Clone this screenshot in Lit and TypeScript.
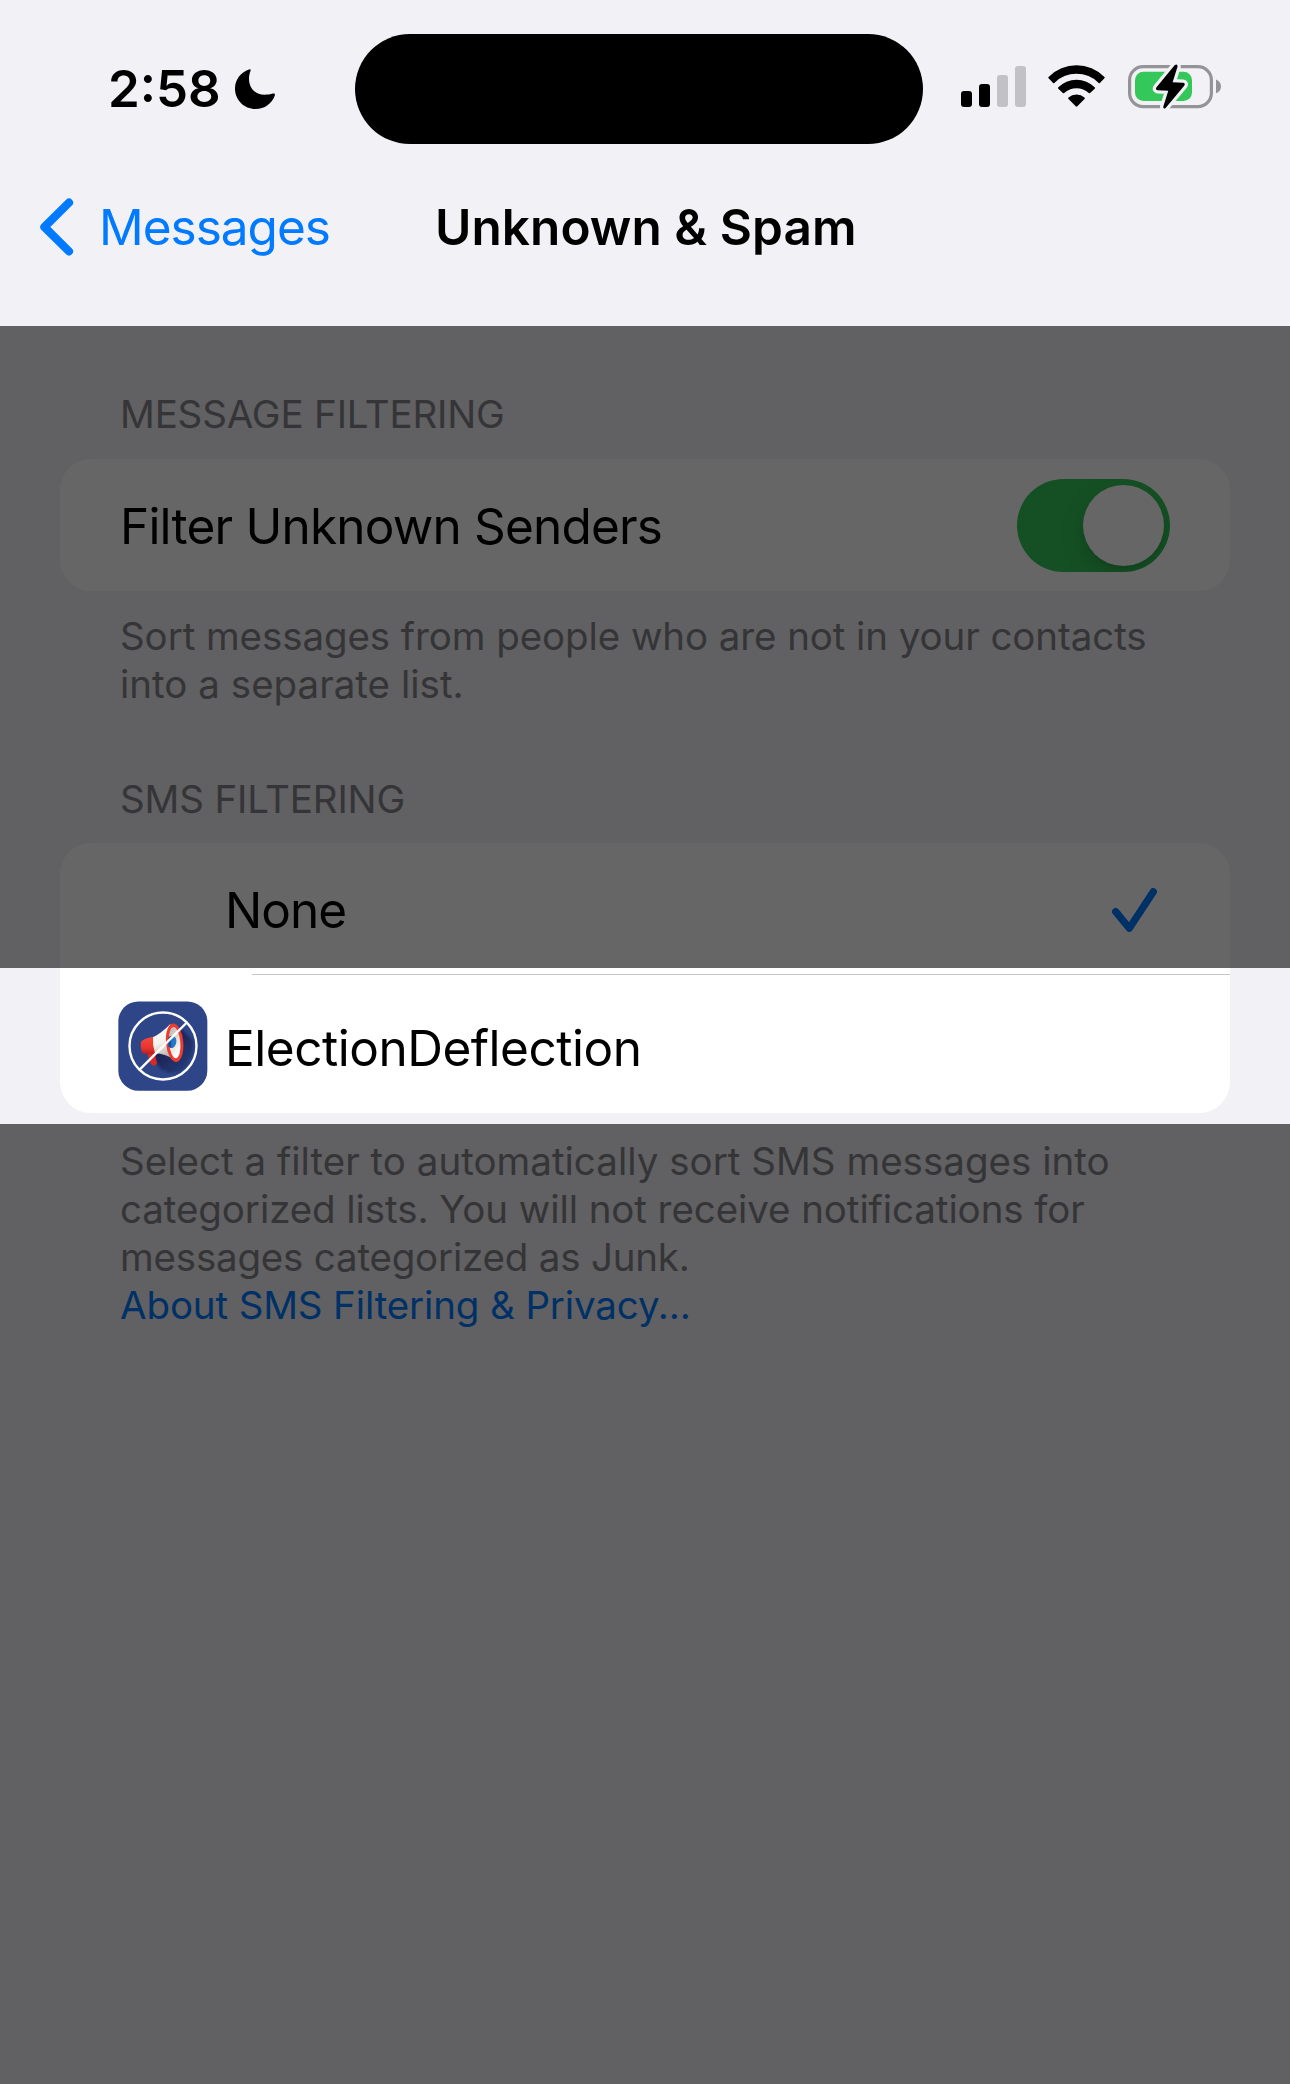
import { LitElement, html, css, svg, nothing } from "lit";
import { customElement, property, state } from "lit/decorators.js";

const FONT = css`"Inter", "Liberation Sans", sans-serif`;

/** Status bar with the clock, the island cut-out and the system indicators. */
@customElement("status-bar")
export class StatusBar extends LitElement {
  static styles = css`
    :host {
      display: grid;
      grid-template-columns: 355px 568px 1fr;
      height: 162px;
      font-family: ${FONT};
    }
    .left {
      display: flex;
      align-items: flex-start;
      padding: 58px 0 0 108px;
    }
    .time {
      font-size: 51px;
      font-weight: 600;
      line-height: 61px;
      width: 127px;
      flex: none;
    }
    .moon {
      margin-top: 11px;
      flex: none;
    }
    .island {
      margin-top: 34px;
      height: 110px;
      border-radius: 55px;
      background: #000;
    }
    .right {
      display: flex;
      align-items: flex-start;
      padding: 62px 0 0 38px;
    }
    .right svg {
      display: block;
      flex: none;
    }
    .wifi {
      margin: 3px 0 0 22px;
    }
    .battery {
      margin-left: 23px;
    }
    .signal {
      margin-top: 4px;
    }
  `;

  render() {
    return html`
      <div class="left">
        <span class="time">2:58</span>
        <svg class="moon" width="40" height="40" viewBox="0 0 40 40">
          <path d="M14 .4C15.5-.2 16 .6 15.5 1.9C14.5 4.2 14 6.8 14 9.6C14 19 20 25.8 29.5 25.8C32.5 25.8 35.5 25.4 37.9 24.6C39.4 24.2 40.3 25 39.8 26.4C37 34.5 29.5 40 20.6 40C9 40 0 31 0 19.5C0 10.5 5.5 3.4 14 .4Z" />
        </svg>
      </div>
      <div class="island"></div>
      <div class="right">
        <svg class="signal" width="65" height="41" viewBox="0 0 65 41">
          <rect x="0" y="25" width="11" height="16" rx="3" />
          <rect x="18" y="18" width="11" height="23" rx="3" />
          <rect x="36" y="9" width="11" height="32" rx="3" fill="#c2c1c6" />
          <rect x="54" y="0" width="11" height="41" rx="3" fill="#c2c1c6" />
        </svg>
        <svg class="wifi" width="57" height="42" viewBox="0 0 57 42">
          <path d="M.6 12A39.2 39.2 0 0 1 56.4 12Q57 12.7 56.4 13.3L51.9 17.9Q51.3 18.5 50.7 17.9A31.4 31.4 0 0 0 6.3 17.9Q5.7 18.5 5.1 17.9L.6 13.3Q0 12.7 .6 12Z" />
          <path d="M10.3 22.3A25.6 25.6 0 0 1 46.7 22.3Q47.4 23 46.7 23.7L42.1 28Q41.5 28.6 40.8 28A18 18 0 0 0 16.2 28Q15.5 28.6 14.9 28L10.3 23.7Q9.6 23 10.3 22.3Z" />
          <path d="M20.5 32.6A11.8 11.8 0 0 1 36.5 32.6Q37.3 33.4 36.5 34.1L29.3 41.3Q28.5 42 27.7 41.3L20.5 34.1Q19.7 33.4 20.5 32.6Z" />
        </svg>
        <svg class="battery" width="94" height="50" viewBox="0 0 94 50">
          <rect x="1.6" y="4.6" width="81.8" height="40" rx="13.5" fill="none" stroke="#949397" stroke-width="3.2" />
          <rect x="7" y="9.8" width="57" height="29.2" rx="8.5" fill="#34c759" />
          <path d="M88 17.5C91.2 18.7 93 21.3 93 24.4S91.2 30.1 88 31.3Z" fill="#949397" />
          <path
            d="M46.6 3.3L28.5 25.3Q27 27.7 29.5 28.2L40.3 28.8L35.3 44.6Q35 47.6 37.6 46L56.2 23.7Q57.8 21.2 55 20.8L44.6 20.2L49.6 4.6Q49.4 1.2 46.6 3.3Z"
            fill="#000"
            stroke="#f2f1f6"
            stroke-width="6.5"
            stroke-linejoin="round"
            paint-order="stroke"
          />
        </svg>
      </div>
    `;
  }
}

/** Navigation bar with a back link and a title. */
@customElement("nav-bar")
export class NavBar extends LitElement {
  @property() back = "";
  @property() heading = "";

  static styles = css`
    :host {
      display: grid;
      grid-template-columns: 435px 1fr;
      align-items: center;
      height: 130px;
      font: 400 49.5px/60px ${FONT};
      white-space: nowrap;
    }
    .back {
      display: flex;
      align-items: center;
      padding-left: 39px;
      color: #007aff;
      letter-spacing: -1px;
    }
    .back svg {
      width: 35px;
      height: 58px;
      margin-right: 25px;
    }
    .title {
      font-weight: 600;
      letter-spacing: 0.06px;
    }
  `;

  render() {
    return html`
      <div class="back">
        <svg viewBox="0 0 35 58" fill="none" stroke="#007aff" stroke-width="8.2" stroke-linecap="round" stroke-linejoin="round">
          <path d="M30 4.7L5.4 29L30 53.3" />
        </svg>
        <span>${this.back}</span>
      </div>
      <div class="title">${this.heading}</div>
    `;
  }
}

/** On/off switch. */
@customElement("ios-switch")
export class IosSwitch extends LitElement {
  @property({ type: Boolean, reflect: true }) on = false;

  static styles = css`
    :host {
      display: flex;
      align-items: center;
      box-sizing: border-box;
      width: 153px;
      height: 93px;
      padding: 6px;
      border-radius: 47px;
      background: #e9e9ea;
      overflow: hidden;
    }
    :host([on]) {
      justify-content: flex-end;
      background: #34c759;
    }
    .knob {
      width: 81px;
      height: 81px;
      border-radius: 50%;
      background: #fff;
      box-shadow: 0 9px 24px rgba(0, 0, 0, 0.15), 0 3px 3px rgba(0, 0, 0, 0.06);
    }
  `;

  render() {
    return html`<div class="knob"></div>`;
  }
}

const appIcon = svg`
  <defs>
    <linearGradient id="cone" x1="0" y1="0" x2=".25" y2="1">
      <stop offset="0" stop-color="#ffffff" />
      <stop offset=".55" stop-color="#f6f1ec" />
      <stop offset="1" stop-color="#b8aea6" />
    </linearGradient>
    <linearGradient id="cap" x1="0" y1="0" x2="0" y2="1">
      <stop offset="0" stop-color="#f4493c" />
      <stop offset=".65" stop-color="#e8342c" />
      <stop offset="1" stop-color="#b32026" />
    </linearGradient>
    <linearGradient id="bell" x1="0" y1="0" x2=".4" y2="1">
      <stop offset="0" stop-color="#b9b0a4" />
      <stop offset=".5" stop-color="#ddd8d0" />
      <stop offset="1" stop-color="#ffffff" />
    </linearGradient>
    <linearGradient id="shade" x1="0" y1="0" x2="1" y2="1">
      <stop offset="0" stop-color="#101c48" stop-opacity=".95" />
      <stop offset=".45" stop-color="#16224f" stop-opacity=".85" />
      <stop offset="1" stop-color="#1d2c62" stop-opacity=".3" />
    </linearGradient>
    <filter id="soft" x="-20%" y="-20%" width="140%" height="140%">
      <feGaussianBlur stdDeviation="3" />
    </filter>
  </defs>
  <rect x="56" y="47.5" width="267" height="267.5" rx="60" fill="#2e4688" />
  <path d="M150 205L240 125L280 165Q282 222 244 256Q212 270 184 250Z" fill="url(#shade)" filter="url(#soft)" />
  <path d="M142 200L164 196L172 233Q170 241 161 240Q153 238 150 228Z" fill="#d62a28" />
  <path d="M162 153Q128 158 124 170Q121 184 128 203Q142 208 170 203Z" fill="url(#cap)" />
  <path d="M160 155Q186 142 212 115L232 226Q196 204 166 203Q158 180 160 155Z" fill="url(#cone)" />
  <ellipse cx="225" cy="171" rx="26" ry="58" transform="rotate(-5 225 171)" fill="#ee3a30" />
  <ellipse cx="225" cy="171" rx="17" ry="47" transform="rotate(-5 225 171)" fill="url(#bell)" />
  <path d="M206 156Q212 148 221 151Q231 156 230 169Q228 182 219 187Q209 188 206 181Z" fill="#2478c8" />
  <path d="M206 156Q211 150 216 152Q214 170 215 186Q209 187 206 181Z" fill="#174f96" />
  <g fill="none" stroke="#fff" stroke-width="7.2">
    <circle cx="190" cy="181" r="100.5" />
    <path d="M120 252L260 112" />
  </g>
`;

interface FilterOption {
  name: string;
  tracking: "none" | "app";
  hasIcon: boolean;
}

const OPTIONS: FilterOption[] = [
  { name: "None", tracking: "none", hasIcon: false },
  { name: "ElectionDeflection", tracking: "app", hasIcon: true },
];

interface NoteLine {
  text: string;
  fit: "" | "loose" | "tight";
}

const SORT_NOTE: NoteLine[] = [
  { text: "Sort messages from people who are not in your contacts", fit: "" },
  { text: "into a separate list.", fit: "loose" },
];
const FILTER_NOTE: NoteLine[] = [
  { text: "Select a filter to automatically sort SMS messages into", fit: "loose" },
  { text: "categorized lists. You will not receive notifications for", fit: "" },
  { text: "messages categorized as Junk.", fit: "tight" },
];

@customElement("app-root")
export class AppRoot extends LitElement {
  @state() private selected = "None";

  static styles = css`
    :host {
      display: block;
      position: relative;
      width: 1290px;
      height: 2084px;
      overflow: hidden;
      background: #f2f1f6;
      color: #000;
      font-family: ${FONT};
    }
    header {
      height: 326px;
    }
    main {
      padding: 64px 60px 0;
    }
    section + section {
      margin-top: 67px;
    }
    h2,
    .note {
      margin: 0;
      padding: 0 60px;
      font-size: 38.5px;
      font-weight: 400;
      line-height: 48px;
      color: #85848a;
      white-space: nowrap;
    }
    h2 {
      letter-spacing: -0.15px;
      margin-bottom: 21px;
    }
    .sms h2 {
      margin-bottom: 20px;
    }
    .note {
      padding-top: 21px;
      letter-spacing: -0.08px;
    }
    .sms .note {
      padding-top: 24px;
    }
    .line {
      display: block;
    }
    .loose {
      letter-spacing: 0.02px;
    }
    .tight {
      letter-spacing: -0.2px;
    }
    .link {
      color: #007aff;
      letter-spacing: -0.13px;
      text-decoration: none;
    }
    .card {
      border-radius: 31px;
      background: #fff;
      overflow: hidden;
    }
    .row {
      display: flex;
      align-items: center;
      font-size: 49.5px;
      line-height: 60px;
      white-space: nowrap;
    }
    .toggle-row {
      height: 132px;
      padding: 0 60px;
      letter-spacing: -0.8px;
    }
    .label {
      flex: 1;
      margin-top: 2px;
    }
    .option {
      height: 131px;
      padding: 0 73px 0 58px;
    }
    .option.with-icon {
      height: 138px;
    }
    .option.with-icon .label {
      margin-top: 8px;
    }
    .slot {
      width: 107px;
      height: 90px;
      flex: none;
      margin-top: 3px;
    }
    .slot svg,
    .check {
      display: block;
    }
    .none {
      letter-spacing: -0.97px;
    }
    .app {
      letter-spacing: -0.48px;
    }
    .check {
      margin-top: 3px;
    }
    .divider {
      height: 1px;
      margin-left: 192px;
      background: #c5c5c7;
    }
    .dim {
      position: absolute;
      left: 0;
      right: 0;
      background: rgba(0, 0, 0, 0.6);
      pointer-events: none;
    }
    .dim.above {
      top: 326px;
      height: 642px;
    }
    .dim.below {
      top: 1124px;
      bottom: 0;
    }
  `;

  private renderOption(o: FilterOption) {
    return html`
      <div class="row option ${o.hasIcon ? "with-icon" : ""}" @click=${() => (this.selected = o.name)}>
        <div class="slot">
          ${o.hasIcon ? html`<svg width="90" height="90" viewBox="55 46 270 270">${appIcon}</svg>` : nothing}
        </div>
        <span class="label ${o.tracking}">${o.name}</span>
        ${this.selected === o.name
          ? html`<svg class="check" width="45" height="44" viewBox="0 0 45 44" fill="none" stroke="#007aff" stroke-width="7.3" stroke-linecap="round" stroke-linejoin="round">
              <path d="M3.7 23.6L17.3 40.2L41.3 3.7" />
            </svg>`
          : nothing}
      </div>
    `;
  }

  private renderLines(lines: NoteLine[]) {
    return lines.map((l) => html`<span class="line ${l.fit}">${l.text}</span>`);
  }

  render() {
    return html`
      <header>
        <status-bar></status-bar>
        <nav-bar back="Messages" heading="Unknown &amp; Spam"></nav-bar>
      </header>
      <main>
        <section>
          <h2>MESSAGE FILTERING</h2>
          <div class="card">
            <div class="row toggle-row">
              <span class="label">Filter Unknown Senders</span>
              <ios-switch on></ios-switch>
            </div>
          </div>
          <div class="note">${this.renderLines(SORT_NOTE)}</div>
        </section>
        <section class="sms">
          <h2>SMS FILTERING</h2>
          <div class="card">
            ${OPTIONS.map((o, i) => html`${i ? html`<div class="divider"></div>` : nothing}${this.renderOption(o)}`)}
          </div>
          <div class="note">
            ${this.renderLines(FILTER_NOTE)}
            <a class="line link">About SMS Filtering &amp; Privacy...</a>
          </div>
        </section>
      </main>
      <div class="dim above"></div>
      <div class="dim below"></div>
    `;
  }
}
